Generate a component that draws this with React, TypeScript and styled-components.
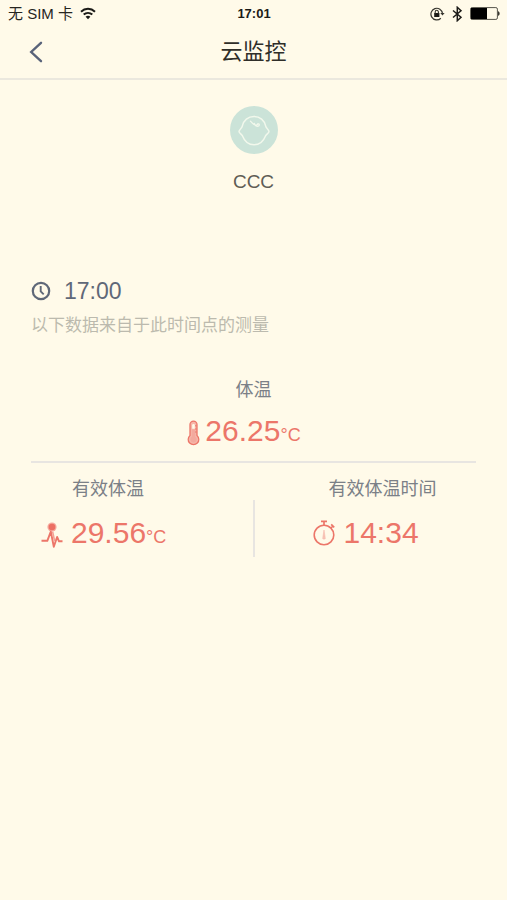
import React from "react";
import styled, { createGlobalStyle } from "styled-components";

const GlobalStyle = createGlobalStyle`
  * { box-sizing: border-box; }
  body {
    margin: 0;
    background: #fffae9;
    font-family: "Liberation Sans", "Noto Sans CJK SC", sans-serif;
  }
  h1, h2, p, dl, dt, dd { margin: 0; font-weight: 400; }
`;

const Screen = styled.div`
  min-height: 100vh;
  display: flex;
  flex-direction: column;
  background: #fffae9;
`;

const StatusBar = styled.div`
  display: grid;
  grid-template-columns: 1fr auto 1fr;
  align-items: center;
  height: 27px;
  padding: 0 7px 0 8px;
  color: #26251f;
  font-size: 15px;
  line-height: 20px;
`;

const StatusGroup = styled.div<{ $end?: boolean }>`
  display: flex;
  align-items: center;
  justify-content: ${(p) => (p.$end ? "flex-end" : "flex-start")};
  gap: 7px;
`;

const Carrier = styled.span`
  white-space: nowrap;
`;

const Clock = styled.span`
  font-size: 13px;
  font-weight: 700;
  color: #1b1a17;
`;

const NavBar = styled.header`
  display: grid;
  grid-template-columns: 72px 1fr 72px;
  align-items: center;
  height: 53px;
  padding-bottom: 2px;
  border-bottom: 2px solid #ebe8de;
`;

const BackButton = styled.button`
  display: flex;
  align-items: center;
  justify-content: center;
  height: 44px;
  padding: 0;
  border: 0;
  background: none;
  color: #59637a;
  cursor: pointer;
`;

const Title = styled.h1`
  text-align: center;
  font-size: 22px;
  line-height: 32px;
  color: #2f2e29;
`;

const Content = styled.main`
  padding: 26px 31px 32px;
`;

const Profile = styled.section`
  display: flex;
  flex-direction: column;
  align-items: center;
  gap: 16px;
`;

const Name = styled.h2`
  font-size: 19px;
  line-height: 24px;
  color: #5f5d55;
`;

const Measured = styled.section`
  margin-top: 82px;
`;

const TimeRow = styled.div`
  display: flex;
  align-items: center;
  gap: 13px;
  color: #5f6878;
  font-size: 23px;
  line-height: 30px;
`;

const Caption = styled.p`
  margin-top: 7px;
  font-size: 17px;
  line-height: 26px;
  color: #bcbaae;
`;

const Readings = styled.dl`
  margin-top: 37px;
`;

const Reading = styled.div<{ $main?: boolean }>`
  display: flex;
  flex-direction: column;
  align-items: ${(p) => (p.$main ? "center" : "flex-start")};
  padding-bottom: ${(p) => (p.$main ? "8px" : "0")};
`;

const Label = styled.dt<{ $indent?: number }>`
  padding-left: ${(p) => p.$indent ?? 0}px;
  font-size: 18px;
  line-height: 28px;
  color: #7b8087;
`;

const Value = styled.dd<{ $indent?: number }>`
  display: flex;
  align-items: center;
  gap: 8px;
  margin-top: 12px;
  padding-left: ${(p) => p.$indent ?? 0}px;
  font-size: 30px;
  line-height: 36px;
  color: #ec7669;
`;

const MainValue = styled(Value)`
  gap: 5px;
  margin: 9px 19px 0 0;
`;

const Unit = styled.small`
  font-size: 18px;
`;

const Pair = styled.div`
  display: grid;
  grid-template-columns: 1fr 2px 1fr;
  padding-top: 12px;
  border-top: 2px solid #e8e5e1;
`;

const Divider = styled.div`
  height: 57px;
  margin-top: 25px;
  background: #e8e5e1;
`;

const WifiIcon = () => (
  <svg width="16" height="13" viewBox="0 0 16 13" fill="none" stroke="#1b1a17" strokeWidth="2" aria-hidden="true">
    <path d="M1 4.7C5 .9 11 .9 15 4.7" />
    <path d="M3.7 7.6c2.5-2.3 6.1-2.3 8.6 0" />
    <path d="M8 12.2 5.6 9.8c1.3-1.3 3.5-1.3 4.8 0z" fill="#1b1a17" stroke="none" />
  </svg>
);

const LockIcon = () => (
  <svg width="15" height="14" viewBox="0 0 15 14" fill="none" stroke="#37362f" aria-hidden="true">
    <path d="M12.5 6.5A5.8 5.8 0 1 0 10.8 11.2" strokeWidth="1.2" />
    <path d="M10.3 6h4.3l-2.1 2.6z" fill="#37362f" stroke="none" />
    <rect x="4.2" y="6" width="5.2" height="4" fill="#1b1a17" stroke="none" />
    <path d="M5.2 6.4V4.9a1.6 1.6 0 0 1 3.2 0v1.5" strokeWidth="1.1" />
  </svg>
);

const BluetoothIcon = () => (
  <svg width="11" height="16" viewBox="0 0 11 16" fill="none" stroke="#1b1a17" strokeWidth="1.5" aria-hidden="true">
    <path d="M1 4.5 9 11.3 5.3 14.7V1.3L9 4.7 1 11.5" />
  </svg>
);

const BatteryIcon = () => (
  <svg width="30" height="13" viewBox="0 0 30 13" aria-hidden="true">
    <rect x=".6" y=".6" width="26.8" height="11.8" rx="1.5" fill="none" stroke="#55534a" />
    <rect x="1" y="1" width="16" height="11" fill="#000" />
    <path d="M28 4.2c2.2.6 2.2 4 0 4.6z" fill="#37362f" />
  </svg>
);

const BackIcon = () => (
  <svg width="14" height="22" viewBox="0 0 14 22" fill="none" stroke="currentColor" strokeWidth="2.4" strokeLinecap="round" aria-hidden="true">
    <path d="M12 1.8 2.2 11 12 20.2" />
  </svg>
);

const Avatar = () => (
  <svg width="48" height="48" viewBox="0 0 48 48" fill="none" role="img" aria-label="头像">
    <circle cx="24" cy="24" r="24" fill="#cbe3d8" />
    <path
      d="M12.2 20.3C13.4 14.2 18.2 10.4 24 10.4s10.6 3.8 11.8 9.9c.2 1.5 3.2 3.8 3.2 5.2 0 1.6-2.5 2.6-3.5 4.4-2.2 5.6-6.4 8.8-11.5 8.8s-9.3-3.2-11.5-8.8c-1-1.8-3.5-2.8-3.5-4.4 0-1.4 3-3.7 3.2-5.2z"
      stroke="#f2f8ec"
      strokeWidth="1.5"
      strokeLinejoin="round"
    />
    <path d="M20.5 15.2c1.6 1.2 2.4 3.2 4.4 3.8 1.6.5 2.9-.2 3-1.4M24.3 17.4c.8 2.4 2.8 3.5 4.4 2.5.7-.5.7-1.4.2-1.9" stroke="#f2f8ec" strokeWidth="1.3" strokeLinecap="round" />
  </svg>
);

const ClockIcon = () => (
  <svg width="20" height="20" viewBox="0 0 20 20" fill="none" stroke="currentColor" aria-hidden="true">
    <circle cx="10" cy="10" r="8.2" strokeWidth="2.2" />
    <path d="M9.7 5v5.4l3 3" strokeWidth="1.9" />
  </svg>
);

const ThermometerIcon = () => (
  <svg width="13" height="26" viewBox="0 0 13 26" aria-hidden="true">
    <path d="M3 4.6a3.5 3.5 0 0 1 7 0v10.8a5.3 5.3 0 1 1-7 0z" fill="#f6b7a9" stroke="#ec7669" strokeWidth="1.3" />
    <path d="M5.2 5.2a1.3 1.3 0 0 1 2.6 0v3.6H5.2z" fill="#fefae9" />
    <path d="M4.8 9.5h3.4v7.2a3.2 3.2 0 1 1-3.4 0z" fill="#f3aa9e" />
    <path d="M8 5.8h1.6M8 9h1.6M8 12h1.6" stroke="#ec7669" />
  </svg>
);

const PulseIcon = () => (
  <svg width="22" height="26" viewBox="0 0 22 26" fill="none" aria-hidden="true">
    <circle cx="11" cy="5" r="4.6" fill="#f5aa9e" />
    <circle cx="11" cy="5" r="3.3" fill="#ec6f63" />
    <path d="M.5 18.8h5.8L9.8 9.6l3 15.2 3.3-9.8 1.9 4.3h3.5" stroke="#ec7669" strokeWidth="1.9" strokeLinejoin="round" />
    <path d="M11.6 9.6 13.6 19" stroke="#f4a094" strokeWidth="1.6" />
  </svg>
);

const StopwatchIcon = () => (
  <svg width="23" height="26" viewBox="0 0 23 26" fill="none" stroke="#ec7669" aria-hidden="true">
    <circle cx="11" cy="15" r="9.8" strokeWidth="1.6" />
    <path d="M8 1.4h6M11 1.4v4M17.8 8l2.2-2.2M18.2 4.4l3 3" strokeWidth="1.7" />
    <path d="M11 10 12.2 17.4a1.3 1.3 0 1 1-2.4 0z" fill="#f7c4b6" stroke="#f5b3a6" strokeWidth=".5" />
  </svg>
);

export default function App() {
  return (
    <Screen>
      <GlobalStyle />
      <StatusBar>
        <StatusGroup>
          <Carrier>无 SIM 卡</Carrier>
          <WifiIcon />
        </StatusGroup>
        <Clock>17:01</Clock>
        <StatusGroup $end>
          <LockIcon />
          <BluetoothIcon />
          <BatteryIcon />
        </StatusGroup>
      </StatusBar>
      <NavBar>
        <BackButton type="button" aria-label="返回">
          <BackIcon />
        </BackButton>
        <Title>云监控</Title>
      </NavBar>
      <Content>
        <Profile>
          <Avatar />
          <Name>CCC</Name>
        </Profile>
        <Measured>
          <TimeRow>
            <ClockIcon />
            <time>17:00</time>
          </TimeRow>
          <Caption>以下数据来自于此时间点的测量</Caption>
        </Measured>
        <Readings>
          <Reading $main>
            <Label>体温</Label>
            <MainValue>
              <ThermometerIcon />
              <span>
                26.25<Unit>°C</Unit>
              </span>
            </MainValue>
          </Reading>
          <Pair>
            <Reading>
              <Label $indent={41}>有效体温</Label>
              <Value $indent={10}>
                <PulseIcon />
                <span>
                  29.56<Unit>°C</Unit>
                </span>
              </Value>
            </Reading>
            <Divider />
            <Reading>
              <Label $indent={74}>有效体温时间</Label>
              <Value $indent={58}>
                <StopwatchIcon />
                <time>14:34</time>
              </Value>
            </Reading>
          </Pair>
        </Readings>
      </Content>
    </Screen>
  );
}
